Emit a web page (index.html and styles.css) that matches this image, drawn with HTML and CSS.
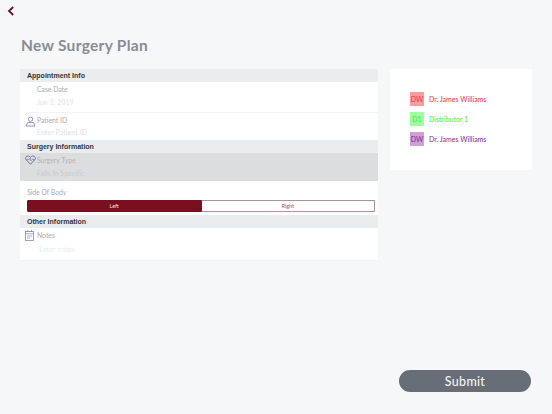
FILE: index.html
```html
<!DOCTYPE html>
<html lang="en">
<head>
<meta charset="utf-8">
<title>New Surgery Plan</title>
<link rel="stylesheet" href="styles.css">
</head>
<body>
<div class="page">
  <button class="back" aria-label="Back">
    <svg width="8" height="10" viewBox="0 0 8 10"><path d="M6.2 1 L2 5 L6.2 9" fill="none" stroke="#6d1020" stroke-width="1.8"/></svg>
  </button>
  <h1 class="title">New Surgery Plan</h1>
  <div class="columns">
    <form class="form">
      <div class="section-head">Appointment Info</div>
      <div class="block appt">
        <div class="field date-field">
          <div class="label">Case Date</div>
          <div class="value">Jun 5, 2019</div>
        </div>
        <div class="field patient-field">
          <svg class="icon" width="11" height="11" viewBox="0 0 11 11"><circle cx="5.5" cy="3.2" r="2.2" fill="none" stroke="#8b86b8" stroke-width="0.9"/><path d="M1 10 L2.6 6.6 H8.4 L10 10 Z" fill="none" stroke="#8b86b8" stroke-width="0.9"/></svg>
          <div class="label">Patient ID</div>
          <div class="value">Enter Patient ID</div>
        </div>
      </div>
      <div class="section-head">Surgery Information</div>
      <div class="block type">
        <svg class="icon" width="11" height="10" viewBox="0 0 11 10"><path d="M5.5 9.2 L1.2 4.8 C0 3.3 .9 1 2.9 1 C4 1 4.9 1.6 5.5 2.5 C6.1 1.6 7 1 8.1 1 C10.1 1 11 3.3 9.8 4.8 Z" fill="none" stroke="#6f7396" stroke-width="1"/><path d="M1.5 4.6 H4 L5 3.2 L6 5.8 L7 4.6 H9.5" fill="none" stroke="#6f7396" stroke-width="0.7"/></svg>
        <div class="label">Surgery Type</div>
        <div class="value">Falls In Specific</div>
      </div>
      <div class="block side">
        <div class="label">Side Of Body</div>
        <div class="segments">
          <div class="segment active">Left</div>
          <div class="segment">Right</div>
        </div>
      </div>
      <div class="section-head">Other Information</div>
      <div class="block notes">
        <svg class="icon" width="9" height="11" viewBox="0 0 9 11"><rect x="0.5" y="1.5" width="8" height="9" fill="none" stroke="#8b86b8" stroke-width="0.8"/><path d="M0.5 3.8 H8.5 M2 6 H7 M2 8 H5 M2.5 0 V2 M6.5 0 V2" fill="none" stroke="#8b86b8" stroke-width="0.7"/></svg>
        <div class="label">Notes</div>
        <div class="value pale">Enter notes</div>
      </div>
    </form>
    <aside class="team">
      <div class="member red"><span class="badge">DW</span><span>Dr. James Williams</span></div>
      <div class="member green"><span class="badge">D1</span><span>Distributor 1</span></div>
      <div class="member purple"><span class="badge">DW</span><span>Dr. James Williams</span></div>
    </aside>
  </div>
  <div class="footer">
    <button class="submit" type="button">Submit</button>
  </div>
</div>
</body>
</html>
```
FILE: styles.css
```css
* { box-sizing: border-box; }
html, body { margin: 0; height: 100%; }
body {
  background: #f6f7f9;
  font-family: "Lato", "Liberation Sans", sans-serif;
  overflow: hidden;
}
.page {
  width: 552px;
  height: 414px;
  display: flex;
  flex-direction: column;
  padding: 5px 20px 0 0;
}
.back {
  width: 22px;
  height: 12px;
  padding: 0 0 0 7px;
  border: 0;
  background: none;
  display: flex;
  align-items: center;
}
.title {
  margin: 19px 0 0 21px;
  height: 18px;
  font-size: 15.5px;
  line-height: 18px;
  font-weight: 700;
  letter-spacing: 0.3px;
  color: #888d93;
}
.columns {
  margin: 15px 0 0 20px;
  display: flex;
  gap: 12px;
  align-items: flex-start;
}
.form { width: 358px; }
.section-head {
  height: 13px;
  padding-left: 7px;
  background: #ebecee;
  font-family: "Liberation Sans", sans-serif;
  font-size: 7px;
  line-height: 13px;
  font-weight: 700;
  color: #33363b;
}
.block { background: #fff; position: relative; }
.label { font-size: 6.8px; line-height: 9px; color: #a9acb0; }
.value { font-size: 6.8px; line-height: 9px; color: #e0e2e5; letter-spacing: 0.15px; }
.icon { position: absolute; }
.appt { height: 58px; }
.field { position: relative; padding-left: 17px; }
.date-field { height: 30px; padding-top: 3px; }
.date-field .value { margin-top: 4px; }
.patient-field { margin-left: 7px; padding-left: 10px; padding-top: 3px; border-top: 1px solid #f3f4f5; height: 28px; }
.patient-field .icon { left: -2px; top: 3px; }
.patient-field .value { margin-top: 3px; }
.type {
  height: 28px;
  padding: 3px 0 0 17px;
  background: #dcdddf;
}
.type .icon { left: 5px; top: 2px; }
.type .label { color: #b2b4b8; }
.type .value { margin-top: 4px; color: #c9cacd; }
.side { height: 34px; padding: 7px 3px 0 7px; }
.segments {
  margin-top: 3px;
  height: 12px;
  display: flex;
}
.segment {
  flex: 1;
  text-align: center;
  font-size: 5.5px;
  line-height: 10px;
  color: #8a5a64;
  border: 1px solid #b58f97;
  border-left: 0;
  border-radius: 0 1px 1px 0;
}
.segment.active {
  background: #7a0f1f;
  border: 1px solid #7a0f1f;
  border-radius: 1px 0 0 1px;
  color: #f3dfe2;
}
.notes { height: 32px; padding: 3px 0 0 17px; border-bottom: 1px solid #f1f2f4; box-sizing: content-box; height: 29px; }
.notes .icon { left: 5px; top: 2px; }
.notes .value { margin: 5px 0 0 2px; color: #e6edf0; }
.team {
  width: 142px;
  height: 101px;
  padding: 23px 0 0 20px;
  background: #fff;
  display: flex;
  flex-direction: column;
  gap: 6px;
}
.member {
  display: flex;
  align-items: center;
  gap: 5px;
  font-size: 7px;
  height: 14px;
}
.badge {
  width: 14px;
  height: 14px;
  text-align: center;
  line-height: 14px;
}
.red { color: #e8323f; }
.red .badge { background: #ff9d9d; }
.green { color: #3fe84a; }
.green .badge { background: #9dff9d; }
.purple { color: #8a1f8f; }
.purple .badge { background: #cfa0d6; }
.footer {
  margin-top: auto;
  padding: 0 1px 22px 0;
  display: flex;
  justify-content: flex-end;
}
.submit {
  width: 132px;
  height: 22px;
  border: 0;
  border-radius: 11px;
  background: #686e78;
  color: #f2f3f5;
  font-family: inherit;
  font-size: 12.5px;
  font-weight: 500;
  letter-spacing: 0.3px;
}
```
